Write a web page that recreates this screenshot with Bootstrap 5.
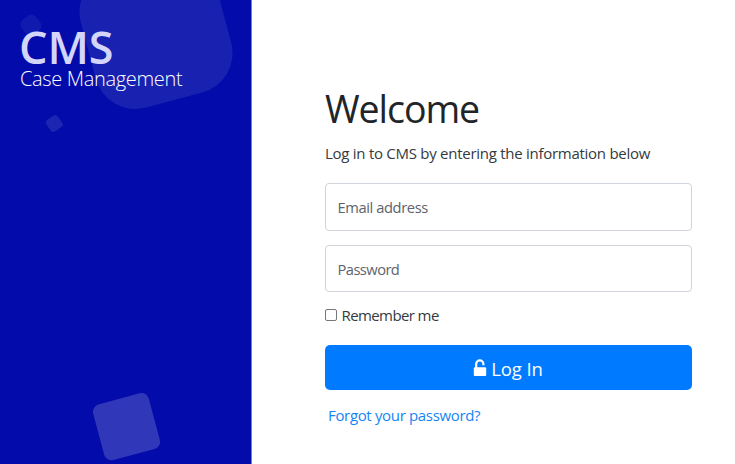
<!DOCTYPE html>
<html lang="en">
<head>
<meta charset="utf-8">
<meta name="viewport" content="width=device-width, initial-scale=1">
<title>CMS - Log In</title>
<link href="https://cdn.jsdelivr.net/npm/bootstrap@5.3.0/dist/css/bootstrap.min.css" rel="stylesheet">
<style>
body { font-family: "Segoe UI", "Open Sans", "Noto Sans", sans-serif; color: #212529; height: 464px; overflow: hidden; }
.brand-panel { width: 252px; height: 464px; background: #030caa; border-right: 1px solid #7479d4; padding: 24px 0 0 19px; }
.brand-shapes { position: absolute; left: 0; top: 0; z-index: 0; }
.brand-text { position: relative; z-index: 1; white-space: nowrap; }
.brand-name { font-size: 45px; line-height: 46px; font-weight: 600; color: #d3d5fb; letter-spacing: -.1px; }
.brand-sub { font-size: 20px; line-height: 20px; margin: -1px 0 0 1px; font-weight: 300; color: #fff; letter-spacing: -.33px; }
.login-area { padding: 85px 43px 0 73px; }
.login-title { font-size: 37.5px; line-height: 48px; font-weight: 400; letter-spacing: -1.05px; }
.login-intro { font-size: 15px; line-height: 22px; margin-top: 9px; white-space: nowrap; letter-spacing: -.27px; color: #343a40; }
.login-field { font-family: inherit; font-size: 14.7px; height: 48px; padding: 0 12px 0 11.5px; border-color: #d0d5db; border-radius: 4px; letter-spacing: -.4px; }
.login-field::placeholder { color: #5c636b; }
.login-email { margin-top: 19px; }
.login-password { height: 47px; margin-top: 14px; padding-top: 1px; letter-spacing: -.55px; }
.remember { margin-top: 12px; font-size: 15px; line-height: 22px; gap: 4.5px; letter-spacing: -.6px; color: #343a40; }
.remember .form-check-input { width: 12px; height: 12px; border: 1px solid #767676; border-radius: 2px; }
.login-btn { height: 45px; margin-top: 19px; background: #007bff; border: 0; border-radius: 5px; font-size: 18.5px; color: #fff; letter-spacing: -.1px; padding: 2px 1px 0 0; }
.login-btn svg { margin-top: -2px; }
.forgot { font-size: 15px; line-height: 22px; color: #1485f5; margin: 14px 0 0 3px; letter-spacing: -.34px; }
</style>
<script src="https://cdn.jsdelivr.net/npm/bootstrap@5.3.0/dist/js/bootstrap.bundle.min.js" defer></script>
</head>
<body class="d-flex bg-white">
<aside class="brand-panel position-relative flex-shrink-0 overflow-hidden">
  <svg class="brand-shapes" width="251" height="464" viewBox="0 0 251 464" fill="#fff" aria-hidden="true">
    <rect x="86" y="-37.5" width="140" height="140" rx="41" fill-opacity=".09" transform="rotate(-15 156 32.5)"/>
    <rect x="21.7" y="15.9" width="18.4" height="18.4" rx="6" fill-opacity=".06" transform="rotate(-38 30.9 25.1)"/>
    <rect x="47.3" y="116.6" width="14" height="14" rx="3.5" fill-opacity=".1" transform="rotate(-35 54.3 123.6)"/>
    <rect x="97.7" y="397.9" width="57.6" height="57.6" rx="7.5" fill-opacity=".18" transform="rotate(-15 126.5 426.7)"/>
  </svg>
  <div class="brand-text">
    <div class="brand-name">CMS</div>
    <div class="brand-sub">Case Management</div>
  </div>
</aside>
<main class="login-area flex-grow-1">
  <form>
    <h1 class="login-title mb-0">Welcome</h1>
    <p class="login-intro mb-0">Log in to CMS by entering the information below</p>
    <input type="email" class="form-control login-field login-email" placeholder="Email address" aria-label="Email address">
    <input type="password" class="form-control login-field login-password" placeholder="Password" aria-label="Password">
    <label class="remember d-flex align-items-center"><input type="checkbox" class="form-check-input m-0"><span>Remember me</span></label>
    <button type="button" class="btn login-btn w-100 d-flex align-items-center justify-content-center gap-1">
      <svg width="14" height="18" viewBox="0 0 14 18" aria-hidden="true"><path d="M3.2 9V5a3.6 3.6 0 0 1 7.2 0v1.2" fill="none" stroke="#fff" stroke-width="2.2"/><rect x=".8" y="8.2" width="12.4" height="8.8" rx="1" fill="#fff"/></svg>
      <span>Log In</span>
    </button>
    <a href="#" class="forgot d-inline-block text-decoration-none">Forgot your password?</a>
  </form>
</main>
</body>
</html>
